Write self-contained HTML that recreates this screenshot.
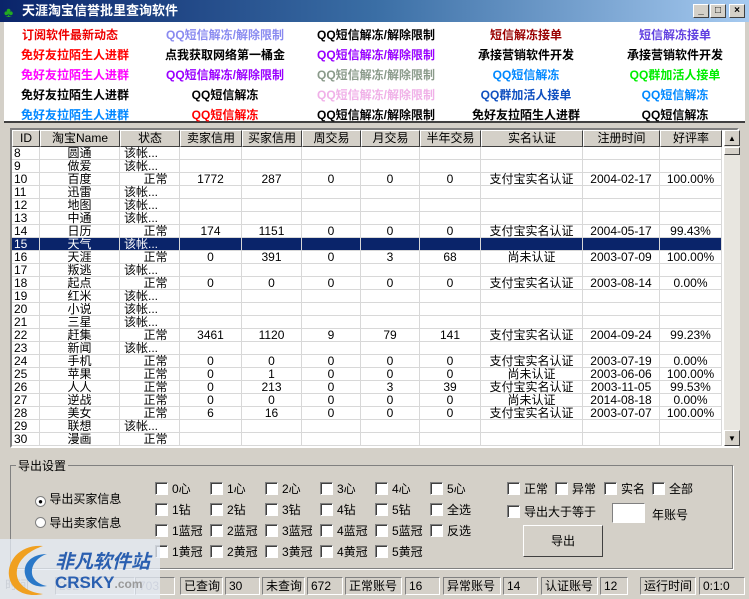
<!DOCTYPE html>
<html><head><meta charset="utf-8"><style>
*{margin:0;padding:0;box-sizing:border-box}
body{width:749px;height:599px;overflow:hidden;background:#d4d0c8;font-family:"Liberation Sans","Noto Sans CJK SC",sans-serif;font-size:12px;color:#000;position:relative}
.a{position:absolute;white-space:nowrap}
#title{left:0;top:0;width:749px;height:22px;background:linear-gradient(90deg,#0a246a,#3a6ea5 50%,#a6caf0);color:#fff;font-weight:bold;font-size:13px;line-height:22px;padding-left:22px}
.tb{width:16px;height:14px;top:4px;background:#d4d0c8;border:1px solid;border-color:#fff #404040 #404040 #fff;font-size:10px;line-height:12px;text-align:center;color:#000;font-weight:bold}
#top{left:4px;top:22px;width:741px;height:101px;background:#fff;border-bottom:2px solid #404040}
.l{position:absolute;font-weight:bold;font-size:12px;text-align:center;width:150px;transform:translateX(-75px);white-space:nowrap}
#grid{left:10px;top:128px;width:729px;height:320px;background:#fff;border:2px solid;border-color:#808080 #fff #fff #808080}
.hd{position:absolute;top:0;height:17px;background:#d4d0c8;border:1px solid;border-color:#fff #404040 #404040 #fff;text-align:center;line-height:15px}
.r{position:absolute;left:0;width:710px;height:13px;line-height:13px;border-bottom:1px solid #d8d8d8}
.r span{position:absolute;top:0;text-align:center;height:13px;border-right:1px solid #d8d8d8;white-space:nowrap}
.sel{background:#0a246a;color:#fff}
.sb{left:712px;top:0;width:16px;height:316px;background:#e8e6e0}
.cb{position:absolute;width:13px;height:13px;background:#fff;border:1px solid;border-color:#808080 #fff #fff #808080;box-shadow:inset 1px 1px #404040}
.ck{position:absolute;white-space:nowrap}
.st{position:absolute;top:577px;height:18px;border:1px solid;border-color:#808080 #fff #fff #808080;line-height:16px;padding-left:3px;white-space:nowrap;overflow:hidden}
</style></head><body>
<div id="title" class="a">天涯淘宝信誉批里查询软件</div>
<div class="a" style="left:4px;top:4px;color:#2a2;font-size:14px">♣</div>
<div class="a tb" style="left:693px">_</div><div class="a tb" style="left:710px">□</div><div class="a tb" style="left:729px">×</div>
<div id="top" class="a">
<div class="l" style="left:66px;top:4px;color:#e00">订阅软件最新动态</div>
<div class="l" style="left:221px;top:4px;color:#8a8af0">QQ短信解冻/解除限制</div>
<div class="l" style="left:372px;top:4px">QQ短信解冻/解除限制</div>
<div class="l" style="left:522px;top:4px;color:#900">短信解冻接单</div>
<div class="l" style="left:671px;top:4px;color:#6040e0">短信解冻接单</div>
<div class="l" style="left:71px;top:24px;color:#f00">免好友拉陌生人进群</div>
<div class="l" style="left:221px;top:24px">点我获取网络第一桶金</div>
<div class="l" style="left:372px;top:24px;color:#90f">QQ短信解冻/解除限制</div>
<div class="l" style="left:522px;top:24px">承接营销软件开发</div>
<div class="l" style="left:671px;top:24px">承接营销软件开发</div>
<div class="l" style="left:71px;top:44px;color:#f0f">免好友拉陌生人进群</div>
<div class="l" style="left:221px;top:44px;color:#90f">QQ短信解冻/解除限制</div>
<div class="l" style="left:372px;top:44px;color:#8a9a8a">QQ短信解冻/解除限制</div>
<div class="l" style="left:522px;top:44px;color:#08f">QQ短信解冻</div>
<div class="l" style="left:671px;top:44px;color:#0e0">QQ群加活人接单</div>
<div class="l" style="left:71px;top:64px">免好友拉陌生人进群</div>
<div class="l" style="left:221px;top:64px">QQ短信解冻</div>
<div class="l" style="left:372px;top:64px;color:#f0b0e8">QQ短信解冻/解除限制</div>
<div class="l" style="left:522px;top:64px;color:#1050c0">QQ群加活人接单</div>
<div class="l" style="left:671px;top:64px;color:#08f">QQ短信解冻</div>
<div class="l" style="left:71px;top:84px;color:#08f">免好友拉陌生人进群</div>
<div class="l" style="left:221px;top:84px;color:#f00">QQ短信解冻</div>
<div class="l" style="left:372px;top:84px">QQ短信解冻/解除限制</div>
<div class="l" style="left:522px;top:84px">免好友拉陌生人进群</div>
<div class="l" style="left:671px;top:84px">QQ短信解冻</div>
</div>
<div id="grid" class="a">
<div class="hd" style="left:0;width:28px">ID</div>
<div class="hd" style="left:28px;width:80px">淘宝Name</div>
<div class="hd" style="left:108px;width:60px">状态</div>
<div class="hd" style="left:168px;width:62px">卖家信用</div>
<div class="hd" style="left:230px;width:60px">买家信用</div>
<div class="hd" style="left:290px;width:59px">周交易</div>
<div class="hd" style="left:349px;width:59px">月交易</div>
<div class="hd" style="left:408px;width:61px">半年交易</div>
<div class="hd" style="left:469px;width:102px">实名认证</div>
<div class="hd" style="left:571px;width:77px">注册时间</div>
<div class="hd" style="left:648px;width:62px">好评率</div>
<div class="a sb"><div class="hd" style="left:0;top:0;width:16px;height:16px;font-size:8px">▲</div><div class="hd" style="left:0;top:17px;width:16px;height:8px"></div><div class="hd" style="left:0;top:300px;width:16px;height:16px;font-size:8px">▼</div></div>
<div id="rows"></div>
</div>
<script>
var d=[["8","圆通"],["9","做爱"],["10","百度","1772","287","0","0","0","支付宝实名认证","2004-02-17","100.00%"],["11","迅雷"],["12","地图"],["13","中通"],["14","日历","174","1151","0","0","0","支付宝实名认证","2004-05-17","99.43%"],["15","天气"],["16","天涯","0","391","0","3","68","尚未认证","2003-07-09","100.00%"],["17","叛逃"],["18","起点","0","0","0","0","0","支付宝实名认证","2003-08-14","0.00%"],["19","红米"],["20","小说"],["21","三星"],["22","赶集","3461","1120","9","79","141","支付宝实名认证","2004-09-24","99.23%"],["23","新闻"],["24","手机","0","0","0","0","0","支付宝实名认证","2003-07-19","0.00%"],["25","苹果","0","1","0","0","0","尚未认证","2003-06-06","100.00%"],["26","人人","0","213","0","3","39","支付宝实名认证","2003-11-05","99.53%"],["27","逆战","0","0","0","0","0","尚未认证","2014-08-18","0.00%"],["28","美女","6","16","0","0","0","支付宝实名认证","2003-07-07","100.00%"],["29","联想"],["30","漫画",""]];
var L=[0,28,108,168,230,290,349,408,469,571,648,710],h="";
d.forEach(function(r,i){var c=[r[0],r[1],r.length>2?"　正常":"该帐..."].concat(r.slice(2));
if(r.length==3)c=[r[0],r[1],"　正常"];
h+='<div class="r'+(r[0]=="15"?" sel":"")+'" style="top:'+(17+i*13)+'px">';
for(var j=0;j<11;j++){var t=c[j]||"";h+='<span style="left:'+L[j]+'px;width:'+(L[j+1]-L[j])+'px;'+(j==0?'text-align:left;padding-left:2px;':'')+(j==2&&t.indexOf("该")==0?'text-align:left;padding-left:4px;':'')+'">'+t+'</span>';}
h+='</div>';});
document.getElementById("rows").innerHTML=h;
</script>
<div class="a" style="left:10px;top:465px;width:723px;height:104px;border:1px solid #808080;box-shadow:1px 1px #fff"></div>
<div class="a" style="left:16px;top:457px;background:#d4d0c8;padding:0 2px">导出设置</div>
<div class="a" style="left:35px;top:490px"><span style="display:inline-block;width:11px;height:11px;border-radius:50%;background:#fff;border:1px solid #808080;vertical-align:-1px;text-align:center;line-height:9px;font-size:8px">●</span> 导出买家信息</div>
<div class="a" style="left:35px;top:514px"><span style="display:inline-block;width:11px;height:11px;border-radius:50%;background:#fff;border:1px solid #808080;vertical-align:-1px"></span> 导出卖家信息</div>
<div id="cbs"></div>
<script>
var g=[["0心","1心","2心","3心","4心","5心"],["1钻","2钻","3钻","4钻","5钻","全选"],["1蓝冠","2蓝冠","3蓝冠","4蓝冠","5蓝冠","反选"],["1黄冠","2黄冠","3黄冠","4黄冠","5黄冠"]],s="";
g.forEach(function(r,i){r.forEach(function(t,j){var x=155+j*55,y=482+i*21;s+='<div class="cb" style="left:'+x+'px;top:'+y+'px"></div><div class="ck" style="left:'+(x+17)+'px;top:'+(y-2)+'px">'+t+'</div>';});});
[["正常",507],["异常",555],["实名",604],["全部",652]].forEach(function(a){s+='<div class="cb" style="left:'+a[1]+'px;top:482px"></div><div class="ck" style="left:'+(a[1]+17)+'px;top:480px">'+a[0]+'</div>';});
s+='<div class="cb" style="left:507px;top:505px"></div><div class="ck" style="left:524px;top:503px">导出大于等于</div>';
document.getElementById("cbs").innerHTML=s;
</script>
<div class="a" style="left:612px;top:503px;width:33px;height:20px;background:#fff;border:1px solid;border-color:#808080 #fff #fff #808080"></div>
<div class="a" style="left:652px;top:506px">年账号</div>
<div class="a" style="left:523px;top:525px;width:80px;height:32px;border:1px solid;border-color:#fff #404040 #404040 #fff;text-align:center;line-height:30px">导出</div>
<div class="st" style="left:2px;width:50px;border:none;color:#777">时间</div>
<div class="st" style="left:55px;width:80px;color:#889">2024-</div>
<div class="st" style="left:135px;width:40px;color:#889">703</div>
<div class="st" style="left:180px;width:43px">已查询</div><div class="st" style="left:225px;width:35px">30</div>
<div class="st" style="left:262px;width:43px">未查询</div><div class="st" style="left:307px;width:36px">672</div>
<div class="st" style="left:345px;width:57px">正常账号</div><div class="st" style="left:405px;width:35px">16</div>
<div class="st" style="left:443px;width:58px">异常账号</div><div class="st" style="left:503px;width:35px">14</div>
<div class="st" style="left:541px;width:57px">认证账号</div><div class="st" style="left:600px;width:28px">12</div>
<div class="st" style="left:640px;width:56px">运行时间</div><div class="st" style="left:699px;width:46px">0:1:0</div>
<div class="a" style="left:0;top:539px;width:160px;height:60px;background:rgba(230,236,245,.75)"></div>
<svg class="a" style="left:3px;top:540px" width="50" height="58"><path d="M40 6C18 4 4 20 6 36c2 14 16 22 34 18C22 52 12 42 14 30 16 18 28 10 40 6z" fill="#f0a020"/><path d="M44 14C28 14 20 24 22 34c2 10 12 14 22 12-10-2-16-8-15-16 1-8 8-14 15-16z" fill="#2a78c8"/></svg>
<div class="a" style="left:55px;top:547px;color:#2a5fb0;font-weight:bold;font-size:19px;font-style:italic">非凡软件站</div>
<div class="a" style="left:55px;top:573px;color:#2a5fb0;font-weight:bold;font-size:17px">CRSKY<span style="font-size:12px;color:#999">.com</span></div>
</body></html>
